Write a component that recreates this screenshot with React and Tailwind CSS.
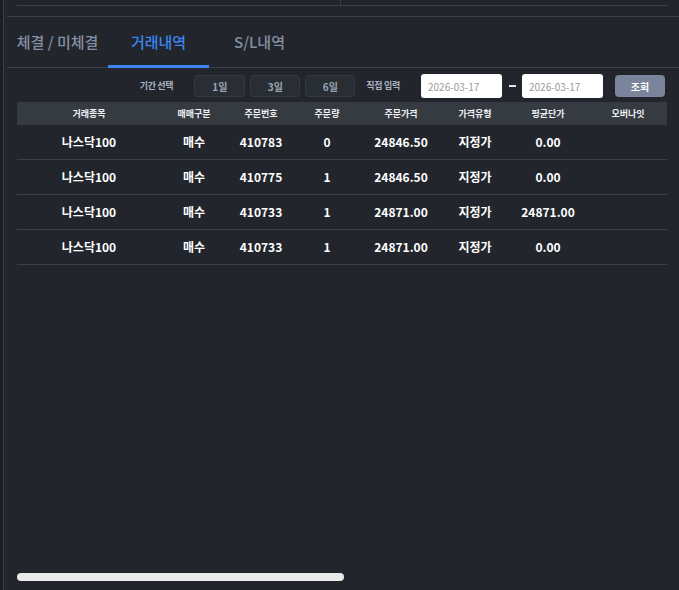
import React from 'react';

const tabs = ['체결 / 미체결', '거래내역', 'S/L내역'];

const columns = ['거래종목', '매매구분', '주문번호', '주문량', '주문가격', '가격유형', '평균단가', '오버나잇'];

const rows = [
  ['나스닥100', '매수', '410783', '0', '24846.50', '지정가', '0.00', ''],
  ['나스닥100', '매수', '410775', '1', '24846.50', '지정가', '0.00', ''],
  ['나스닥100', '매수', '410733', '1', '24871.00', '지정가', '24871.00', ''],
  ['나스닥100', '매수', '410733', '1', '24871.00', '지정가', '0.00', ''],
];

const grid = 'grid grid-cols-[144px_66px_68px_64px_84px_64px_82px_78px]';
const font = { fontFamily: '"Noto Sans CJK KR", "Noto Sans", sans-serif' };

const App = () => {
  return (
    <div className="w-[679px] h-[590px] bg-[#22252c] flex overflow-hidden" style={font}>
      {/* left gutter */}
      <div className="w-[4px] bg-[#1b1d22] border-r border-[#3a3e46]" />

      <div className="flex-1 flex flex-col pl-[3px]">
        {/* top strip */}
        <div className="h-[17px] border-b border-[#3c4048] shrink-0">
          <div className="ml-[10px] mr-[11px] h-[6px] flex border-b border-[#3c4048]">
            <div className="w-[324px] border-r border-[#3c4048]" />
          </div>
        </div>

        {/* tabs */}
        <div className="h-[51px] border-b border-[#3c4048] flex shrink-0">
          {tabs.map((t, i) => (
            <div
              key={t}
              className={`w-[101px] flex items-center justify-center text-[15px] font-medium border-b-[3px] mb-[-1px] pt-[2px] ${
                i === 1 ? 'text-[#3d86f2] border-[#3d86f2] font-bold' : 'text-[#8590a2] border-transparent'
              }`}
            >
              {t}
            </div>
          ))}
        </div>

        {/* filter row */}
        <div className="mt-[6px] h-[24px] flex items-center justify-end pr-[14px] shrink-0">
          <span className="text-[9px] font-bold text-[#aab2c0] mr-[21px] tracking-[-0.3px]">기간 선택</span>
          <div className="flex gap-[5px]">
            {['1일', '3일', '6일'].map((d, i) => (
              <button
                key={d}
                className={`${i === 0 ? 'w-[51px]' : 'w-[50px]'} h-[22px] rounded-[4px] bg-[#292d34] border border-[#353940] text-[10px] font-bold text-[#9ca5b4]`}
              >
                {d}
              </button>
            ))}
          </div>
          <span className="text-[9px] font-bold text-[#aab2c0] ml-[11px] mr-[21px] tracking-[-0.3px]">직접 입력</span>
          <div className="w-[81px] h-[24px] rounded-[3px] bg-white flex items-center pl-[7px] text-[10px] text-[#9a9a9a]">2026-03-17</div>
          <div className="w-[20px] flex justify-center">
            <div className="w-[7px] h-[2px] bg-[#e5e7eb]" />
          </div>
          <div className="w-[81px] h-[24px] rounded-[3px] bg-white flex items-center pl-[7px] text-[10px] text-[#9a9a9a]">2026-03-17</div>
          <button className="ml-[12px] w-[50px] h-[22px] rounded-[4px] bg-[#7a849a] text-[10px] font-bold text-white">조회</button>
        </div>

        {/* table */}
        <div className="mt-[4px] ml-[10px] w-[650px] shrink-0">
          <div className={`${grid} h-[23px] bg-[#363a41] items-center text-[9px] font-bold text-[#eef0f3]`}>
            {columns.map((c) => (
              <div key={c} className="text-center">{c}</div>
            ))}
          </div>
          {rows.map((r, ri) => (
            <div key={ri} className={`${grid} h-[35px] items-center border-b border-[#3c4048] text-[12px] font-bold text-white`}>
              {r.map((v, ci) => (
                <div key={ci} className="text-center">{v}</div>
              ))}
            </div>
          ))}
        </div>

        <div className="flex-1" />

        {/* horizontal scrollbar */}
        <div className="ml-[10px] mb-[9px] w-[327px] h-[8px] rounded-full bg-[#e8e9e8] shrink-0" />
      </div>
    </div>
  );
};

export default App;
